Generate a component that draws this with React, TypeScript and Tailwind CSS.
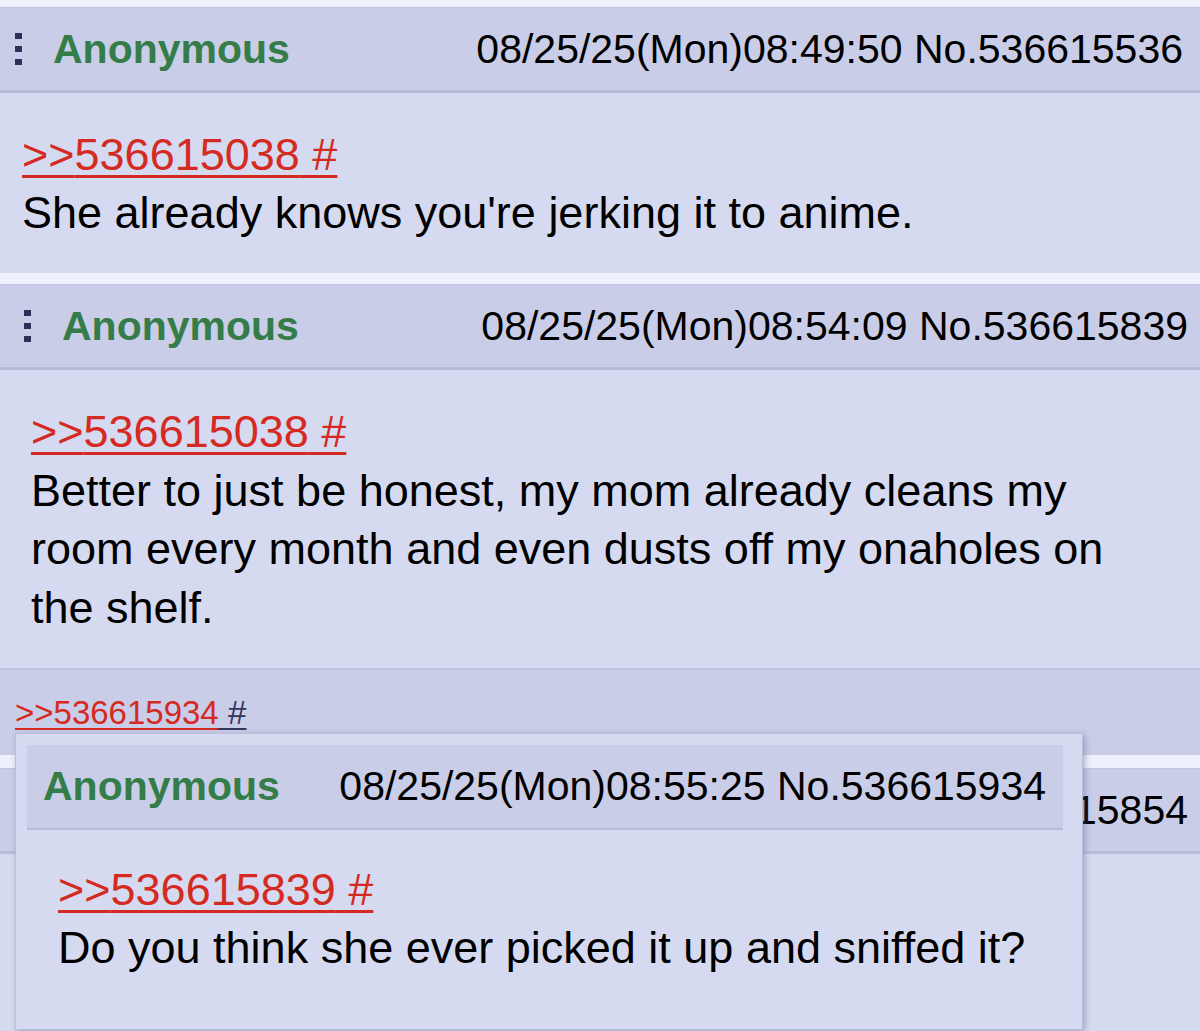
import React from "react";

const FONT = { fontFamily: '"Liberation Sans", Arial, Helvetica, sans-serif' };

function Dots() {
  return (
    <div className="flex flex-col gap-[7px] w-[7px] shrink-0">
      <div className="w-[7px] h-[6px] bg-[#2f2f57]" />
      <div className="w-[7px] h-[6px] bg-[#2f2f57]" />
      <div className="w-[7px] h-[6px] bg-[#2f2f57]" />
    </div>
  );
}

function Header({
  pl,
  pr,
  date,
}: {
  pl: string;
  pr: string;
  date: string;
}) {
  return (
    <div
      className={`flex items-center h-[86px] bg-[#c9cde8] border-t border-t-[#bfc4e0] border-b-[3px] border-b-[#b7bdd8] ${pl} ${pr}`}
    >
      <Dots />
      <span className="ml-[31px] text-[41px] font-bold text-[#347c48] leading-none">
        Anonymous
      </span>
      <span className="ml-auto text-[41px] text-black leading-none">{date}</span>
    </div>
  );
}

function QuoteLink({ num }: { num: string }) {
  return (
    <div>
      <a className="text-[#d42a22] underline decoration-[3px] underline-offset-[5px]">
        &gt;&gt;{num} #
      </a>
    </div>
  );
}

export default function App() {
  return (
    <div
      className="relative w-[1200px] h-[1031px] overflow-hidden bg-[#eef0fb] pt-[7px]"
      style={FONT}
    >
      {/* Post 1 */}
      <div>
        <Header pl="pl-[15px]" pr="pr-[17px]" date="08/25/25(Mon)08:49:50 No.536615536" />
        <div className="bg-[#d6daf0] pt-[33px] pb-[31px] pl-[22px] text-[45px] leading-[58px] text-black">
          <QuoteLink num="536615038" />
          <div>She already knows you're jerking it to anime.</div>
        </div>
      </div>

      {/* Post 2 */}
      <div className="mt-[11px]">
        <Header pl="pl-[24px]" pr="pr-[12px]" date="08/25/25(Mon)08:54:09 No.536615839" />
        <div className="bg-[#d6daf0] pt-[33px] pb-[31px] pl-[31px] pr-[60px] text-[45px] leading-[58.5px] text-black">
          <QuoteLink num="536615038" />
          <div>
            Better to just be honest, my mom already cleans my
            <br />
            room every month and even dusts off my onaholes on
            <br />
            the shelf.
          </div>
        </div>
        <div className="h-[87px] bg-[#c9cde8] border-t-2 border-t-[#bcc2dc] pl-[15px] flex items-center">
          <span className="text-[33px] leading-none underline decoration-2 underline-offset-[4px]">
            <a className="text-[#d42a22] decoration-[#d42a22]">&gt;&gt;536615934</a>
            <a className="text-[#34345c] decoration-[#34345c]"> #</a>
          </span>
        </div>
      </div>

      {/* Post 3 */}
      <div className="mt-[13px]">
        <Header pl="pl-[24px]" pr="pr-[12px]" date="08/25/25(Mon)08:54:47 No.536615854" />
        <div className="bg-[#d6daf0] h-[300px]" />
      </div>

      {/* Hover preview popup */}
      <div className="absolute left-[15px] top-[733px] w-[1068px] h-[297px] bg-[#d6daf0] border border-[#b9bfd8] shadow-[2px_2px_6px_rgba(90,100,140,0.45)] pt-[11px] pl-[11px] pr-[19px]">
        <div className="flex items-center h-[85px] bg-[#c9cde8] border-b-2 border-b-[#b7bdd8] pl-[16px] pr-[17px]">
          <span className="text-[41px] font-bold text-[#347c48] leading-none">Anonymous</span>
          <span className="ml-auto text-[41px] text-black leading-none">
            08/25/25(Mon)08:55:25 No.536615934
          </span>
        </div>
        <div className="pt-[31px] pl-[31px] text-[45px] leading-[58px] text-black">
          <QuoteLink num="536615839" />
          <div>Do you think she ever picked it up and sniffed it?</div>
        </div>
      </div>
    </div>
  );
}
